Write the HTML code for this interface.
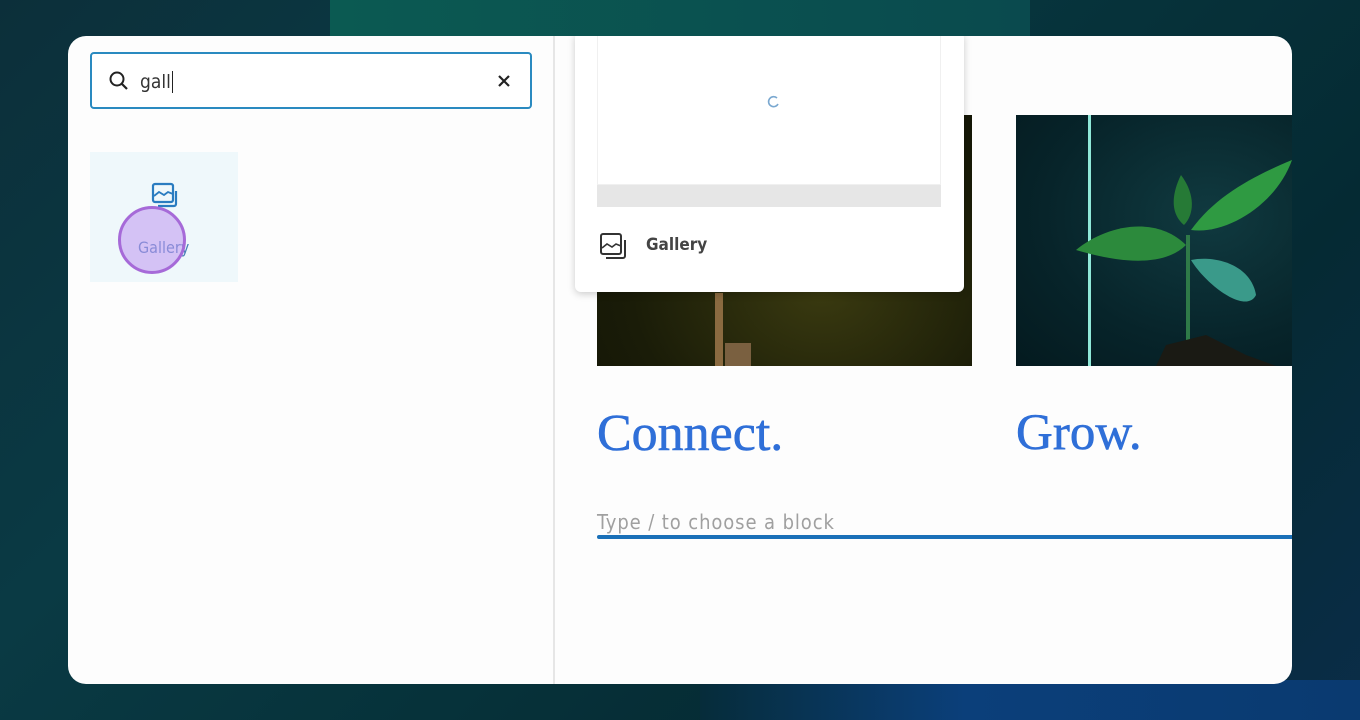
<!DOCTYPE html>
<html><head><style>
*{margin:0;padding:0;box-sizing:border-box}
body{width:1360px;height:720px;overflow:hidden;position:relative;font-family:"Liberation Sans",sans-serif;
background:linear-gradient(135deg,#0c2f3a 0%,#0a3a44 30%,#06323a 55%,#052a33 75%,#0a2d48 100%);}
.bg1{position:absolute;left:330px;top:0;width:700px;height:60px;background:linear-gradient(90deg,#0b5a52,#0a4a4e);}
.bg2{position:absolute;left:700px;top:680px;width:660px;height:40px;background:linear-gradient(90deg,#062c3a,#0b3f7a 40%,#0a3a70);}
.card{position:absolute;left:68px;top:36px;width:1224px;height:648px;background:#fdfdfd;border-radius:18px;overflow:hidden}
.div{position:absolute;left:485px;top:0;width:2px;height:648px;background:#e6e6e6}
.search{position:absolute;left:22px;top:16px;width:442px;height:57px;border:2px solid #2a8ac0;border-radius:4px;background:#fff}
.search .t{position:absolute;left:48px;top:17px;font-size:19px;color:#333;font-family:"DejaVu Sans Condensed","DejaVu Sans",sans-serif}
.tile{position:absolute;left:22px;top:116px;width:148px;height:130px;background:#eff8fb}
.tile .l{position:absolute;left:48px;top:86px;font-size:16px;color:#4a7fb8;font-family:"DejaVu Sans Condensed",sans-serif}
.circ{position:absolute;left:50px;top:170px;width:68px;height:68px;border-radius:50%;background:rgba(190,150,240,.55);border:3px solid #a66ad8}
.img1{position:absolute;left:529px;top:79px;width:375px;height:251px;background:radial-gradient(ellipse at 60% 70%,#3a3a10,#1a1c08 60%,#111305)}
.img2{position:absolute;left:948px;top:79px;width:276px;height:251px;background:radial-gradient(ellipse at 70% 40%,#103a40,#07242a 60%,#041a1f)}
.pop{position:absolute;left:507px;top:-4px;width:389px;height:260px;background:#fff;border-radius:6px;box-shadow:0 2px 8px rgba(0,0,0,.2)}
h2{position:absolute;font-family:"Liberation Serif","DejaVu Serif",serif;font-weight:normal;color:#2f6fd8;font-size:52px;-webkit-text-stroke:0.6px #2f6fd8}
</style></head><body>
<div class="bg1"></div><div class="bg2"></div>
<div class="card">
 <div class="div"></div>
 <div class="search">
  <svg style="position:absolute;left:16px;top:16px" width="22" height="22" viewBox="0 0 22 22"><circle cx="9" cy="9" r="6.5" fill="none" stroke="#222" stroke-width="2"/><path d="M14 14l5 5" stroke="#222" stroke-width="2.2"/></svg>
  <div class="t">gall<span style="border-left:1.5px solid #222;margin-left:1px"></span></div>
  <svg style="position:absolute;left:404px;top:19px" width="16" height="16" viewBox="0 0 16 16"><path d="M3 3l10 10M13 3L3 13" stroke="#222" stroke-width="2.2"/></svg>
 </div>
 <div class="tile">
  <svg style="position:absolute;left:60px;top:30px" width="28" height="28" viewBox="0 0 28 28"><rect x="3" y="2" width="20" height="18" rx="2" fill="none" stroke="#2a7cc0" stroke-width="2.2"/><path d="M4 14l5-4 5 3 4-3 5 2" fill="none" stroke="#2a7cc0" stroke-width="1.8"/><path d="M26 9v13a2 2 0 0 1-2 2H8" fill="none" stroke="#2a7cc0" stroke-width="2.2"/></svg>
  <div class="l">Gallery</div>
 </div>
 <div class="circ"></div>
 <div class="img1"><div style="position:absolute;left:118px;top:178px;width:8px;height:73px;background:#8a6a40"></div><div style="position:absolute;left:128px;top:228px;width:26px;height:23px;background:#7a6040"></div></div>
 <div class="img2"><div style="position:absolute;left:72px;top:0;width:3px;height:251px;background:#8fe8d8"></div>
  <svg style="position:absolute;left:60px;top:40px" width="216" height="211" viewBox="0 0 216 211"><path d="M112 211V80" stroke="#2f7a48" stroke-width="4"/><path d="M110 90C80 60 30 70 0 95 50 110 90 110 110 90z" fill="#2c8a3c"/><path d="M115 75C140 40 180 20 216 5 200 50 150 80 115 75z" fill="#2f9a42"/><path d="M108 70C90 55 100 30 105 20 120 40 118 60 108 70z" fill="#267a36"/><path d="M115 105C140 100 175 110 180 140 170 160 130 130 115 105z" fill="#3a9a8a"/><path d="M90 190l40-10 40 20 30 11H80z" fill="#1a1a14"/></svg>
 </div>
 <div class="pop">
  <div style="position:absolute;left:22px;top:0;width:344px;height:153px;border:1px solid #f0f0f0;border-top:none"></div>
  <svg style="position:absolute;left:192px;top:62px" width="14" height="14" viewBox="0 0 14 14"><path d="M10 4A5 5 0 1 0 11 10" fill="none" stroke="#7aa8d0" stroke-width="1.6"/></svg>
  <div style="position:absolute;left:22px;top:153px;width:344px;height:22px;background:#e6e6e6"></div>
  <svg style="position:absolute;left:24px;top:200px" width="30" height="30" viewBox="0 0 30 30"><rect x="2" y="2" width="20" height="20" rx="2" fill="none" stroke="#333" stroke-width="2"/><path d="M3 16l5-4 5 3 4-3 5 2" fill="none" stroke="#333" stroke-width="1.6"/><path d="M26 8v16a2 2 0 0 1-2 2H7" fill="none" stroke="#333" stroke-width="2"/></svg>
  <div style="position:absolute;left:71px;top:203px;font-size:17px;font-weight:bold;color:#444;font-family:'DejaVu Sans Condensed',sans-serif">Gallery</div>
 </div>
 <h2 style="left:529px;top:368px">Connect.</h2>
 <h2 style="left:948px;top:368px;font-size:51px">Grow.</h2>
 <div style="position:absolute;left:529px;top:474px;font-size:20px;letter-spacing:0.9px;color:#a0a0a0;font-family:'DejaVu Sans Condensed',sans-serif">Type / to choose a block</div>
 <div style="position:absolute;left:529px;top:499px;width:700px;height:4px;background:#1a70b8;border-radius:2px"></div>
</div>
</body></html>
